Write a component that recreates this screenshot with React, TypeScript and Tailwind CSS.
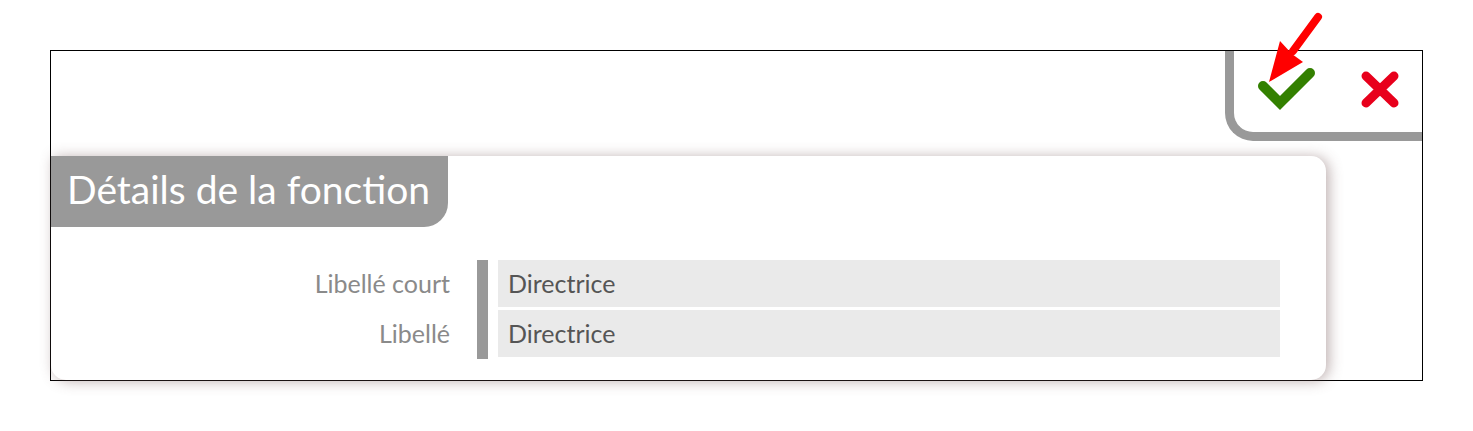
import React from "react";

const rows = [
  { label: "Libellé court", value: "Directrice" },
  { label: "Libellé", value: "Directrice" },
];

const App: React.FC = () => {
  return (
    <div className="w-[1473px] h-[431px] bg-white pt-[50px] pl-[50px] font-['Lato',sans-serif]">
      <div className="w-[1373px] h-[331px] border border-black flex flex-col">
        {/* action buttons */}
        <div className="self-end w-[197px] h-[90px] border-l-[9px] border-b-[9px] border-[#999999] rounded-bl-[28px] relative">
          <button type="button" className="absolute left-[16px] top-[9px]">
            <svg width="70" height="55" viewBox="0 0 70 55">
              <path d="M13 26 L30 43 L60 13" fill="none" stroke="#338000" strokeWidth="10" strokeLinecap="round" strokeLinejoin="miter" />
            </svg>
          </button>
          <button type="button" className="absolute left-[122px] top-[15px]">
            <svg width="48" height="48" viewBox="0 0 48 48">
              <path d="M10 10 L38 37 M38 10 L10 37" fill="none" stroke="#e8001c" strokeWidth="9" strokeLinecap="round" />
            </svg>
          </button>
        </div>

        {/* card */}
        <div className="mt-[15px] w-[1275px] flex-1 bg-white rounded-[15px] rounded-tl-none shadow-[3px_1px_14px_rgba(110,80,80,0.45)] flex flex-col">
          <div className="self-start w-[397px] h-[71px] bg-[#999999] rounded-br-[24px] flex items-center pl-[16px] pb-[4px]">
            <span className="text-white text-[39px] leading-none">Détails de la fonction</span>
          </div>
          <div className="flex mt-[33px]">
            <div className="w-[399px] flex flex-col gap-[3px]">
              {rows.map((r) => (
                <div key={r.label} className="h-[47px] flex items-center justify-end text-[25px] text-[#8a8a8a]">
                  {r.label}
                </div>
              ))}
            </div>
            <div className="ml-[27px] w-[11px] h-[99px] bg-[#999999]" />
            <div className="ml-[10px] w-[782px] flex flex-col gap-[3px]">
              {rows.map((r) => (
                <div key={r.label} className="h-[47px] bg-[#eaeaea] flex items-center pl-[10px] text-[25px] text-[#555555]">
                  {r.value}
                </div>
              ))}
            </div>
          </div>
        </div>
      </div>

      {/* red pointer arrow */}
      <svg className="absolute left-[1255px] top-[10px]" width="70" height="80" viewBox="0 0 70 80">
        <path d="M63 7 L38 41" stroke="#ff0000" strokeWidth="8" strokeLinecap="round" />
        <polygon points="14,72 25,31 37,44 48,52" fill="#ff0000" />
      </svg>
    </div>
  );
};

export default App;
